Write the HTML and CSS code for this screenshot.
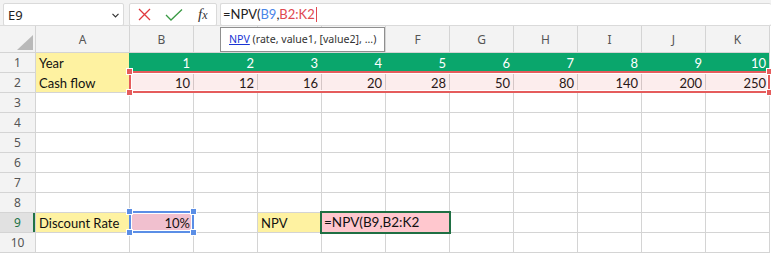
FILE: index.html
```html
<!DOCTYPE html>
<html lang="en">
<head>
    <meta charset="UTF-8">
    <meta name="viewport" content="width=device-width, initial-scale=1.0">
    <title>NPV</title>
    <link rel="stylesheet" href="styles.css">
</head>
<body>
    <div class="app">
        <div class="formula-bar">
            <div class="name-box">
                <span>E9</span>
                <svg class="chevron" width="7" height="5" viewBox="0 0 7 5"><polyline points="0.5,0.8 3.5,3.8 6.5,0.8" fill="none" stroke="#333" stroke-width="1.2"/></svg>
            </div>
            <div class="fx-buttons">
                <svg class="icon" width="13" height="13" viewBox="0 0 13 13"><path d="M1 1 L12 12 M12 1 L1 12" stroke="#e0393e" stroke-width="1.3" fill="none"/></svg>
                <svg class="icon" width="18" height="14" viewBox="0 0 18 14"><polyline points="1,7 6,12 17,1.5" stroke="#3a9a44" stroke-width="1.3" fill="none"/></svg>
                <span class="fx">f<span class="fx-x">x</span></span>
            </div>
            <div class="formula-input">=NPV(<span class="ref-blue">B9</span>,<span class="ref-red">B2:K2</span><span class="caret"></span></div>
        </div>

        <div class="sheet">
            <div class="grid">
                <div class="corner"><svg width="16" height="15" viewBox="0 0 16 15"><polygon points="16,0 16,15 0,15" fill="#b9b9b9"/></svg></div>
                <div class="col-head">A</div>
                <div class="col-head">B</div>
                <div class="col-head">C</div>
                <div class="col-head">D</div>
                <div class="col-head">E</div>
                <div class="col-head">F</div>
                <div class="col-head">G</div>
                <div class="col-head">H</div>
                <div class="col-head">I</div>
                <div class="col-head">J</div>
                <div class="col-head">K</div>

                <div class="row-head">1</div>
                <div class="cell yellow yellow-down">Year</div>
                <div class="cell green num">1</div>
                <div class="cell green num">2</div>
                <div class="cell green num">3</div>
                <div class="cell green num">4</div>
                <div class="cell green num">5</div>
                <div class="cell green num">6</div>
                <div class="cell green num">7</div>
                <div class="cell green num">8</div>
                <div class="cell green num">9</div>
                <div class="cell green num">10</div>

                <div class="row-head">2</div>
                <div class="cell yellow">Cash flow</div>
                <div class="cell num">10</div>
                <div class="cell num">12</div>
                <div class="cell num">16</div>
                <div class="cell num">20</div>
                <div class="cell num">28</div>
                <div class="cell num">50</div>
                <div class="cell num">80</div>
                <div class="cell num">140</div>
                <div class="cell num">200</div>
                <div class="cell num">250</div>

                <div class="row-head">3</div>
                <div class="cell"></div><div class="cell"></div><div class="cell"></div><div class="cell"></div><div class="cell"></div><div class="cell"></div><div class="cell"></div><div class="cell"></div><div class="cell"></div><div class="cell"></div><div class="cell"></div>
                <div class="row-head">4</div>
                <div class="cell"></div><div class="cell"></div><div class="cell"></div><div class="cell"></div><div class="cell"></div><div class="cell"></div><div class="cell"></div><div class="cell"></div><div class="cell"></div><div class="cell"></div><div class="cell"></div>
                <div class="row-head">5</div>
                <div class="cell"></div><div class="cell"></div><div class="cell"></div><div class="cell"></div><div class="cell"></div><div class="cell"></div><div class="cell"></div><div class="cell"></div><div class="cell"></div><div class="cell"></div><div class="cell"></div>
                <div class="row-head">6</div>
                <div class="cell"></div><div class="cell"></div><div class="cell"></div><div class="cell"></div><div class="cell"></div><div class="cell"></div><div class="cell"></div><div class="cell"></div><div class="cell"></div><div class="cell"></div><div class="cell"></div>
                <div class="row-head">7</div>
                <div class="cell"></div><div class="cell"></div><div class="cell"></div><div class="cell"></div><div class="cell"></div><div class="cell"></div><div class="cell"></div><div class="cell"></div><div class="cell"></div><div class="cell"></div><div class="cell"></div>
                <div class="row-head">8</div>
                <div class="cell"></div><div class="cell"></div><div class="cell"></div><div class="cell"></div><div class="cell"></div><div class="cell"></div><div class="cell"></div><div class="cell"></div><div class="cell"></div><div class="cell"></div><div class="cell"></div>

                <div class="row-head active">9</div>
                <div class="cell yellow">Discount Rate</div>
                <div class="cell pink num">10%</div>
                <div class="cell"></div>
                <div class="cell yellow">NPV</div>
                <div class="cell red-fill"></div>
                <div class="cell"></div><div class="cell"></div><div class="cell"></div><div class="cell"></div><div class="cell"></div><div class="cell"></div>

                <div class="row-head">10</div>
                <div class="cell"></div><div class="cell"></div><div class="cell"></div><div class="cell"></div><div class="cell"></div><div class="cell"></div><div class="cell"></div><div class="cell"></div><div class="cell"></div><div class="cell"></div><div class="cell"></div>
            </div>

            <!-- range highlights while editing the formula -->
            <div class="range range-red">
                <span class="handle tl"></span><span class="handle tr"></span>
                <span class="handle bl"></span><span class="handle br"></span>
            </div>
            <div class="range range-blue">
                <span class="handle tl"></span><span class="handle tr"></span>
                <span class="handle bl"></span><span class="handle br"></span>
            </div>
            <div class="edit-cell">=NPV(B9,B2:K2</div>
        </div>

        <div class="tooltip"><a href="#">NPV</a> (rate, value1, [value2], ...)</div>
    </div>
</body>
</html>
```

FILE: styles.css
```css
body {
    margin: 0;
    background: #fff;
    font-family: "Noto Sans", Arial, sans-serif;
    color: #222;
}
.app {
    position: relative;
    width: 771px;
    height: 255px;
    overflow: hidden;
}
.formula-bar {
    display: flex;
    align-items: flex-start;
    height: 26px;
    padding: 3px 0 0 3px;
    box-sizing: border-box;
    background: #f3f3f3;
    border-bottom: 1px solid #dcdcdc;
}
.name-box, .fx-buttons, .formula-input {
    height: 23px;
    box-sizing: border-box;
    background: #fff;
    border: 1px solid #dadada;
    border-radius: 2px;
}
.name-box {
    width: 121px;
    display: flex;
    align-items: center;
    justify-content: space-between;
    padding: 0 4px 0 4px;
    font-size: 13px;
    color: #222;
}
.chevron {
    margin-top: 1px;
}
.fx-buttons {
    width: 88px;
    margin-left: 5px;
    display: flex;
    align-items: center;
    padding-left: 8px;
}
.fx-buttons .icon {
    margin-right: 14px;
}
.fx-buttons .icon + .icon {
    margin-right: 15px;
}
.fx {
    font-family: "Liberation Serif", serif;
    font-style: italic;
    font-size: 15px;
    color: #333;
}
.fx-x {
    font-size: 12px;
}
.formula-input {
    flex: 1;
    margin-left: 3px;
    border-right: none;
    padding-left: 2px;
    font-family: Lato, sans-serif;
    font-size: 13px;
    line-height: 21px;
    color: #222;
    display: flex;
}
.ref-blue {
    color: #4a86e8;
}
.ref-red {
    color: #e0484f;
}
.caret {
    width: 1px;
    height: 15px;
    margin: 3px 0 0 1px;
    background: #e0484f;
}

.sheet {
    position: relative;
}
.grid {
    display: grid;
    grid-template-columns: 35px 93px repeat(10, 63px);
    grid-template-rows: 26px repeat(10, 19px);
    gap: 1px;
    width: 769px;
    background: #d4d4d4;
    border-right: 1px solid #d4d4d4;
    border-bottom: 1px solid #d4d4d4;
}
.corner {
    background: #f3f3f3;
    display: flex;
    align-items: flex-end;
    justify-content: flex-end;
    padding: 0 2px 2px 0;
}
.col-head {
    background: #f3f3f3;
    font-size: 12px;
    color: #555;
    text-align: center;
    line-height: 27px;
}
.row-head {
    background: #f3f3f3;
    font-size: 12px;
    color: #555;
    text-align: center;
    line-height: 20px;
}
.row-head.active {
    background: #e1e1e1;
    color: #217346;
    box-shadow: inset -2px 0 0 #217346;
}
.cell {
    background: #fff;
    font-family: Lato, sans-serif;
    font-size: 13px;
    line-height: 20px;
    padding: 0 3px;
    white-space: nowrap;
    overflow: hidden;
    color: #111;
}
.num {
    text-align: right;
}
.yellow {
    background: #fef2a1;
}
.yellow-down {
    box-shadow: 0 1px 0 #fef2a1;
}
.green {
    background: #0aa66c;
    color: #fff;
    box-shadow: -1px 0 0 #0aa66c;
}
.pink {
    background: #f1c0cf;
}
.red-fill {
    background: #ffc7ce;
}

.range {
    position: absolute;
    box-sizing: border-box;
    border: 2px solid;
    box-shadow: inset 0 0 0 1px #fff;
}
.range-red {
    left: 129px;
    top: 45px;
    width: 641px;
    height: 22px;
    border-color: #e55c5c;
    background: rgba(229, 80, 80, 0.1);
}
.range-blue {
    left: 129px;
    top: 185px;
    width: 65px;
    height: 22px;
    border-color: #5b8ee6;
}
.handle {
    position: absolute;
    width: 5px;
    height: 5px;
    border: 1px solid #fff;
}
.range-red .handle {
    background: #e55c5c;
}
.range-blue .handle {
    background: #5b8ee6;
}
.handle.tl { left: -5px; top: -5px; }
.handle.tr { right: -5px; top: -5px; }
.handle.bl { left: -5px; bottom: -5px; }
.handle.br { right: -5px; bottom: -5px; }

.edit-cell {
    position: absolute;
    left: 320px;
    top: 185px;
    width: 131px;
    height: 23px;
    box-sizing: border-box;
    border: 2px solid #1f6f43;
    background: #ffc7ce;
    padding-left: 2px;
    font-family: Lato, sans-serif;
    font-size: 13.5px;
    line-height: 19px;
    color: #111;
}

.tooltip {
    position: absolute;
    left: 220px;
    top: 27px;
    width: 165px;
    height: 25px;
    box-sizing: border-box;
    background: #fff;
    border: 1px solid #8f8f8f;
    padding-left: 8px;
    font-size: 10.6px;
    line-height: 23px;
    color: #333;
    white-space: nowrap;
}
.tooltip a {
    color: #1a35d4;
    text-decoration: underline;
}
```
